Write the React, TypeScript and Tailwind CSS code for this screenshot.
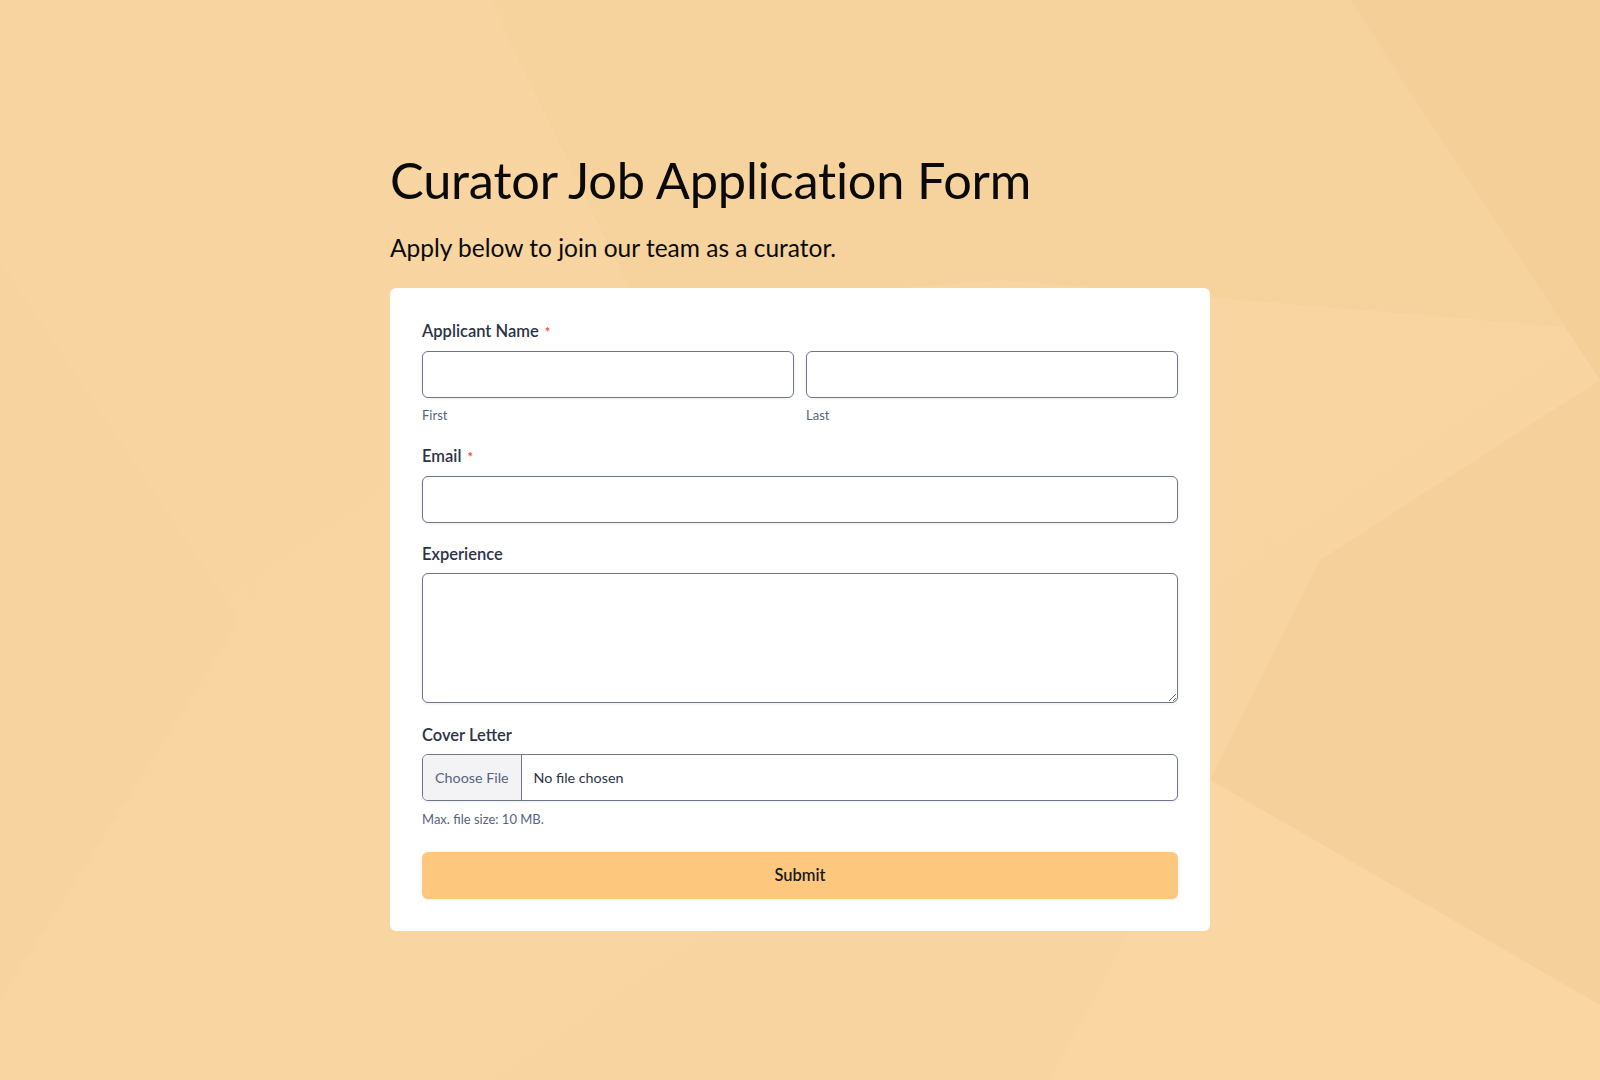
import React from 'react';

const Label: React.FC<{ text: string; required?: boolean }> = ({ text, required }) => (
  <label className="block text-[16.5px] leading-6 font-semibold text-[#2c3345] mb-[7px]">
    {text}
    {required && <span className="text-[#e8412f] ml-1.5 text-[13px]">*</span>}
  </label>
);

const inputCls =
  'block w-full h-[47px] rounded-md border border-[#6f768a] bg-white shadow-[0_1px_3px_rgba(0,0,0,0.08)] outline-none';

const Background: React.FC = () => (
  <svg className="absolute inset-0 w-full h-full" viewBox="0 0 1600 1080" preserveAspectRatio="none">
    <defs>
      <linearGradient id="bg" x1="0" y1="0" x2="1" y2="1">
        <stop offset="0" stopColor="#f7d4a0" />
        <stop offset="0.5" stopColor="#f8d5a1" />
        <stop offset="1" stopColor="#f8d4a0" />
      </linearGradient>
    </defs>
    <rect width="1600" height="1080" fill="url(#bg)" />
    <polygon points="490,0 1600,0 1600,330 1000,280 640,310" fill="#f6d29d" />
    <polygon points="1350,0 1600,0 1600,380" fill="#f4cf98" />
    <polygon points="1210,780 1600,1005 1600,380 1320,560" fill="#f5d09b" />
    <polygon points="1210,780 1600,1005 1600,1080 1050,1080" fill="#f9d6a2" />
    <polygon points="0,260 240,620 0,1000" fill="#f7d39f" />
  </svg>
);

const App: React.FC = () => {
  return (
    <div className="relative w-full min-h-[1080px] overflow-hidden font-['Lato',sans-serif]">
      <Background />
      <div className="relative w-[820px] mx-auto pt-[148px]">
        <h1 className="text-[50.5px] leading-[64px] font-normal tracking-[-0.2px] text-[#0a0a0a] [font-variant-ligatures:none]">
          Curator Job Application Form
        </h1>
        <p className="mt-[20px] text-[24.5px] leading-8 text-[#0a0a0a]">Apply below to join our team as a curator.</p>

        <div className="mt-[24px] bg-white rounded-md pt-[31px] px-8 pb-8">
          <div>
            <Label text="Applicant Name" required />
            <div className="grid grid-cols-2 gap-3">
              <div>
                <input className={inputCls} />
                <div className="mt-[9px] text-[13px] leading-4 text-[#57647e]">First</div>
              </div>
              <div>
                <input className={inputCls} />
                <div className="mt-[9px] text-[13px] leading-4 text-[#57647e]">Last</div>
              </div>
            </div>
          </div>

          <div className="mt-[21px]">
            <Label text="Email" required />
            <input className={inputCls} />
          </div>

          <div className="mt-[19px]">
            <Label text="Experience" />
            <textarea className="block w-full h-[130px] rounded-md border border-[#6f768a] bg-white shadow-[0_1px_3px_rgba(0,0,0,0.08)] outline-none resize-y" />
          </div>

          <div className="mt-[20px]">
            <Label text="Cover Letter" />
            <div className="flex h-[47px] w-full rounded-md border border-[#6f768a] bg-white shadow-[0_1px_3px_rgba(0,0,0,0.08)] overflow-hidden">
              <div className="flex items-center px-3 bg-[#f3f3f5] border-r border-[#6f768a] text-[14.3px] text-[#57647e]">
                Choose File
              </div>
              <div className="flex items-center pl-3 text-[14.3px] text-[#2c3345]">No file chosen</div>
            </div>
            <div className="mt-[10px] text-[13px] leading-4 text-[#57647e]">Max. file size: 10 MB.</div>
          </div>

          <button className="mt-[25px] w-full h-[47px] rounded-md bg-[#fdc87e] text-[16.5px] font-semibold text-[#1a1a1a] shadow-[0_1px_3px_rgba(0,0,0,0.08)]">
            Submit
          </button>
        </div>
      </div>
    </div>
  );
};

export default App;
